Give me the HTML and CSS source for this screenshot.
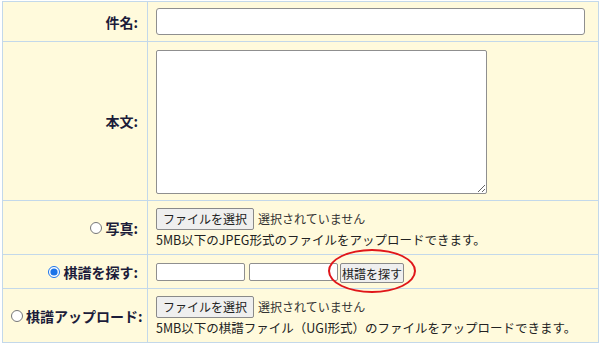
FILE: index.html
```html
<!DOCTYPE html>
<html lang="ja">
  <head>
    <meta charset="UTF-8" />
    <title>投稿フォーム</title>
    <link rel="stylesheet" href="styles.css">
  </head>
  <body>
    <table class="form-table">
      <colgroup>
        <col class="col-label">
        <col>
      </colgroup>
      <tr class="row-title">
        <th>件名:</th>
        <td><input type="text" class="title-input"></td>
      </tr>
      <tr class="row-body">
        <th>本文:</th>
        <td><textarea class="body-area"></textarea></td>
      </tr>
      <tr class="row-file">
        <th><label><input type="radio" name="src"> 写真:</label></th>
        <td>
          <div class="file-line">
            <button class="btn">ファイルを選択</button>
            <span class="file-status">選択されていません</span>
          </div>
          <div class="note">5MB以下のJPEG形式のファイルをアップロードできます。</div>
        </td>
      </tr>
      <tr class="row-search">
        <th><label><input type="radio" name="src" checked> 棋譜を探す:</label></th>
        <td>
          <div class="search-line">
            <input type="text" class="small-input">
            <input type="text" class="small-input">
            <span class="mark">
              <button class="btn">棋譜を探す</button>
            </span>
          </div>
        </td>
      </tr>
      <tr class="row-file">
        <th><label><input type="radio" name="src"> 棋譜アップロード:</label></th>
        <td>
          <div class="file-line">
            <button class="btn">ファイルを選択</button>
            <span class="file-status">選択されていません</span>
          </div>
          <div class="note">5MB以下の棋譜ファイル（UGI形式）のファイルをアップロードできます。</div>
        </td>
      </tr>
    </table>
  </body>
</html>
```

FILE: styles.css
```css
body {
  margin: 0;
  padding: 1px 1px 0 2px;
  background: #ffffff;
  font-family: "Noto Sans CJK JP", "Noto Sans", sans-serif;
  color: #222;
}

.form-table {
  width: 597px;
  table-layout: fixed;
  border-collapse: collapse;
  background: #fffadc;
}

.col-label {
  width: 145px;
}

.form-table th,
.form-table td {
  border: 1px solid #c3d8ea;
  padding: 0 8px;
  vertical-align: middle;
}

.form-table th {
  text-align: right;
  padding-right: 9px;
  font-size: 14px;
  font-weight: bold;
  color: #1c1c3a;
  white-space: nowrap;
}

.form-table label {
  display: inline-flex;
  align-items: center;
  gap: 3px;
}

.form-table input[type="radio"] {
  margin: 0;
  width: 12px;
  height: 12px;
  accent-color: #1a73e8;
}

.row-title { height: 40px; }
.row-body { height: 159px; }
.row-file { height: 54px; }
.row-search { height: 34px; }

.title-input {
  display: block;
  box-sizing: border-box;
  width: 429px;
  height: 27px;
  border: 1px solid #8f8f8f;
  border-radius: 3px;
  background: #fff;
}

.body-area {
  display: block;
  box-sizing: border-box;
  width: 331px;
  height: 144px;
  border: 1px solid #8f8f8f;
  border-radius: 2px;
  background: #fff;
  margin-top: 1px;
}

.file-line {
  display: flex;
  align-items: center;
  gap: 4px;
  font-size: 12px;
  white-space: nowrap;
}

.btn {
  font-family: "Noto Sans CJK JP", "Noto Sans", sans-serif;
  font-size: 12px;
  line-height: 16px;
  color: #222;
  background: #efefef;
  border: 1px solid #8a8a8a;
  border-radius: 2px;
  padding: 2px 5px;
  margin: 0;
  white-space: nowrap;
}

.file-line .btn {
  height: 22px;
  padding: 0 6px;
}

.file-status {
  color: #333;
}

.note {
  font-size: 12.5px;
  line-height: 16px;
  margin-top: 2px;
  color: #222;
  white-space: nowrap;
}

.search-line {
  display: flex;
  align-items: center;
  gap: 4px;
}

.small-input {
  box-sizing: border-box;
  width: 89px;
  height: 18px;
  border: 1px solid #8f8f8f;
  border-radius: 2px;
  background: #fff;
  margin: 0;
}

.mark {
  position: relative;
  display: inline-block;
  margin-left: -2px;
}

.mark .btn {
  height: 20px;
  padding: 0 1px;
  line-height: 15px;
}

.mark::after {
  content: "";
  position: absolute;
  left: -12px;
  top: -11px;
  width: 84px;
  height: 40px;
  border: 2px solid #e0161a;
  border-radius: 50%;
}
```
